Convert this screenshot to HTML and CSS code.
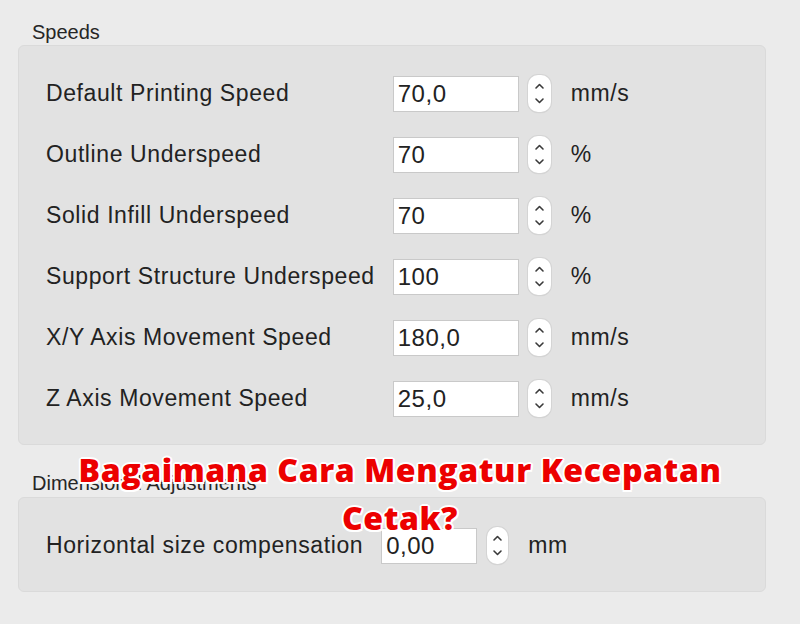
FILE: index.html
```html
<!DOCTYPE html>
<html lang="en">
<head>
    <meta charset="UTF-8">
    <title>Speeds</title>
    <link rel="stylesheet" href="styles.css">
</head>
<body>
    <div class="page">
        <div class="group-title">Speeds</div>
        <div class="panel">
            <div class="rows">
                <label>Default Printing Speed</label>
                <input type="text" value="70,0">
                <span class="stepper"><svg width="23" height="37" viewBox="0 0 23 37"><path d="M8 13 L11.5 9.5 L15 13 M8 24 L11.5 27.5 L15 24"/></svg></span>
                <span class="unit">mm/s</span>

                <label>Outline Underspeed</label>
                <input type="text" value="70">
                <span class="stepper"><svg width="23" height="37" viewBox="0 0 23 37"><path d="M8 13 L11.5 9.5 L15 13 M8 24 L11.5 27.5 L15 24"/></svg></span>
                <span class="unit">%</span>

                <label>Solid Infill Underspeed</label>
                <input type="text" value="70">
                <span class="stepper"><svg width="23" height="37" viewBox="0 0 23 37"><path d="M8 13 L11.5 9.5 L15 13 M8 24 L11.5 27.5 L15 24"/></svg></span>
                <span class="unit">%</span>

                <label>Support Structure Underspeed</label>
                <input type="text" value="100">
                <span class="stepper"><svg width="23" height="37" viewBox="0 0 23 37"><path d="M8 13 L11.5 9.5 L15 13 M8 24 L11.5 27.5 L15 24"/></svg></span>
                <span class="unit">%</span>

                <label>X/Y Axis Movement Speed</label>
                <input type="text" value="180,0">
                <span class="stepper"><svg width="23" height="37" viewBox="0 0 23 37"><path d="M8 13 L11.5 9.5 L15 13 M8 24 L11.5 27.5 L15 24"/></svg></span>
                <span class="unit">mm/s</span>

                <label>Z Axis Movement Speed</label>
                <input type="text" value="25,0">
                <span class="stepper"><svg width="23" height="37" viewBox="0 0 23 37"><path d="M8 13 L11.5 9.5 L15 13 M8 24 L11.5 27.5 L15 24"/></svg></span>
                <span class="unit">mm/s</span>
            </div>
        </div>

        <div class="group-title second">Dimensional Adjustments</div>
        <div class="panel">
            <div class="rows narrow">
                <label>Horizontal size compensation</label>
                <input type="text" value="0,00">
                <span class="stepper"><svg width="21" height="37" viewBox="0 0 21 37"><path d="M7 13 L10.5 9.5 L14 13 M7 24 L10.5 27.5 L14 24"/></svg></span>
                <span class="unit">mm</span>
            </div>
        </div>
    </div>

    <h1 class="caption">Bagaimana Cara Mengatur Kecepatan<br>Cetak?</h1>
</body>
</html>
```

FILE: styles.css
```css
body {
    margin: 0;
    background-color: #ebebeb;
    font-family: "Liberation Sans", Arial, sans-serif;
    color: #222;
}
.page {
    width: 748px;
    padding: 20px 0 0 18px;
}
.group-title {
    font-size: 20px;
    line-height: 25px;
    padding-left: 14px;
    margin-bottom: 0;
    color: #262626;
}
.group-title.second {
    margin-top: 26px;
    margin-bottom: 1px;
}
.panel {
    background-color: #e2e2e2;
    border: 1px solid #dadada;
    border-radius: 6px;
    padding: 29px 0 27px 27px;
}
.rows {
    display: grid;
    grid-template-columns: auto 126px 23px auto;
    column-gap: 18px;
    row-gap: 24px;
    align-items: center;
    justify-content: start;
}
.rows .stepper {
    width: 23px;
    margin-left: -9px;
}
.rows .unit {
    margin-left: -7px;
}
.rows.narrow {
    grid-template-columns: auto 96px 21px auto;
}
.rows.narrow .stepper {
    width: 21px;
    margin-left: -8px;
}
.rows.narrow .unit {
    margin-left: -6px;
}
label {
    font-size: 23px;
    letter-spacing: 0.6px;
    color: #222;
}
input {
    width: 100%;
    height: 36px;
    box-sizing: border-box;
    border: 1px solid #c9c9c9;
    background-color: #fff;
    font-family: "Liberation Sans", Arial, sans-serif;
    font-size: 24px;
    letter-spacing: 0.5px;
    color: #222;
    padding: 0 4px;
    margin: 0;
}
.stepper {
    display: block;
    height: 37px;
    background-color: #fff;
    border-radius: 10px;
    box-shadow: 0 0 0 1px #d4d4d4, 0 1px 1px rgba(0,0,0,.12);
}
.stepper svg {
    display: block;
}
.stepper path {
    fill: none;
    stroke: #3a3a3a;
    stroke-width: 1.6;
    stroke-linecap: round;
    stroke-linejoin: round;
}
.unit {
    font-size: 23px;
    letter-spacing: 0.6px;
    color: #222;
}
.caption {
    position: absolute;
    top: 446px;
    left: 0;
    width: 800px;
    margin: 0;
    text-align: center;
    font-family: "Open Sans", sans-serif;
    font-weight: 800;
    font-size: 32px;
    line-height: 48px;
    letter-spacing: 0.6px;
    color: #ec0000;
    text-shadow: 2px 0 0 #fff, -2px 0 0 #fff, 0 2px 0 #fff, 0 -2px 0 #fff,
        1.5px 1.5px 0 #fff, -1.5px 1.5px 0 #fff, 1.5px -1.5px 0 #fff, -1.5px -1.5px 0 #fff;
}
```
